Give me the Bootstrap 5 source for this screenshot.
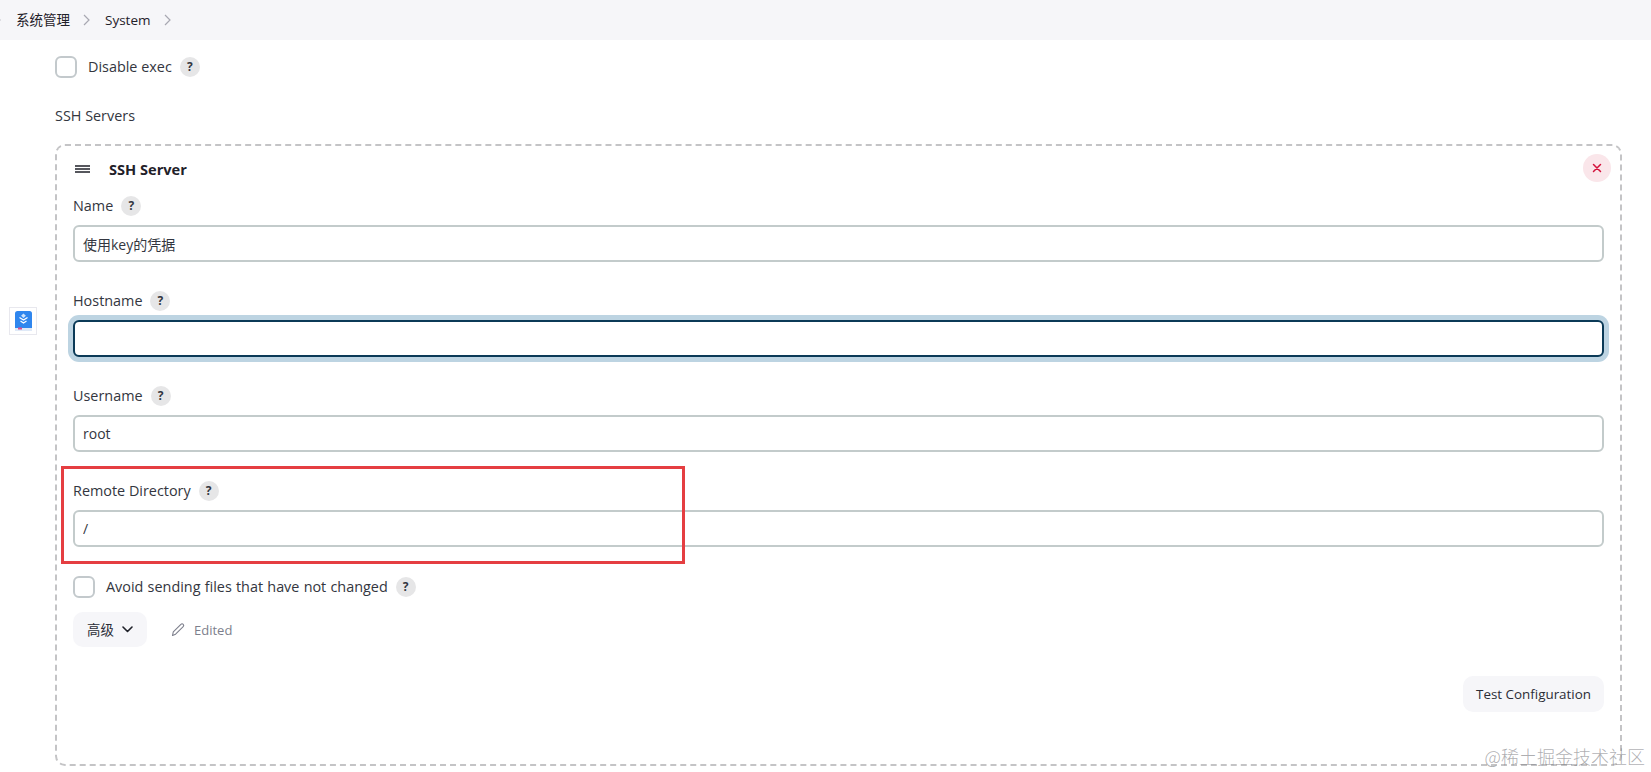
<!DOCTYPE html>
<html lang="en">
<head>
    <meta charset="UTF-8">
    <title>System</title>
    <link href="https://cdn.jsdelivr.net/npm/bootstrap@5.3.3/dist/css/bootstrap.min.css" rel="stylesheet">
    <style>
        html, body { height: 772px; overflow: hidden; }
        body { background: #fff; color: #333640; font-family: "Open Sans", "Noto Sans CJK SC", sans-serif; font-size: 14.4px; line-height: 20px; }
        .crumb-bar { height: 40px; background: #f6f6f9; color: #1f2129; font-size: 13.5px; }
        .crumb-sep { width: 8px; height: 12px; margin: 0 14px 0 13px; flex: none; }
        .crumb-first { margin: 0 14px 0 -6px; }
        .page-body { padding: 16px 29px 0 55px; }
        .jk-check { width: 22px; height: 22px; border: 2px solid #c3c9cc; border-radius: 6px; flex: none; background: #fff; }
        .help-dot { width: 20px; height: 20px; border-radius: 50%; background: #e6e6e7; color: #33363f; font-size: 12px; font-weight: 700; line-height: 20px; text-align: center; flex: none; }
        .row-check { height: 22px; }
        .row-check .help-dot { margin-left: 8px; }
        .row-check .check-text { margin-left: 11px; }
        .servers-title { margin-top: 28px; height: 20px; }
        .repeat-box { margin-top: 18px; height: 622px; border: 2px dashed #c4c4c6; border-radius: 10px; padding: 0 16px; position: relative; }
        .box-head { height: 45px; }
        .grip { width: 15px; margin-left: 2px; margin-right: 19px; }
        .box-title { font-weight: 700; color: #1f2129; font-size: 14.6px; }
        .close-round { position: absolute; top: 8px; right: 9px; width: 28px; height: 28px; border-radius: 50%; background: #fae6ea; }
        .field { height: 95px; padding-top: 5px; }
        .field-label { height: 20px; margin-bottom: 9px; }
        .field-label .help-dot { margin-left: 8px; }
        .jk-input { height: 37px; width: 100%; border: 2px solid #c3cbcb; border-radius: 6px; padding: 0 8px; color: #333640; font-size: 14px; outline: none; display: block; background: #fff; }
        .jk-input.focused { border-color: #0b3a57; box-shadow: 0 0 0 5px #bdd4e2; }
        .avoid-row { margin-top: 5px; word-spacing: .5px; }
        .adv-row { margin-top: 14px; height: 35px; }
        .soft-btn { background: #f6f6f9; border: 0; border-radius: 10px; color: #2b2d36; font-size: 13.4px; }
        .adv-btn { width: 74px; height: 35px; }
        .edited-note { margin-left: 24px; color: #7d7f8c; font-size: 13px; }
        .test-row { margin-top: 29px; }
        .test-btn { width: 141px; height: 36px; }
        .side-widget { position: absolute; left: 9px; top: 307px; width: 28px; height: 28px; background: #fff; border: 1px solid #e8e8ee; }
        .red-frame { position: absolute; left: 61px; top: 466px; width: 624px; height: 98px; border: 3px solid #e53e41; pointer-events: none; }
        .juejin-mark { position: absolute; right: 6px; top: 743px; font-family: "Noto Sans CJK SC", sans-serif; font-size: 18px; line-height: 26px; color: rgba(120,120,125,.6); font-weight: 300; }
    </style>
</head>
<body>
    <div class="crumb-bar d-flex align-items-center">
        <svg class="crumb-sep crumb-first" viewBox="0 0 8 12" fill="none" stroke="#a8a8b2" stroke-width="1.2"><path d="M1 1l5 5-5 5"/></svg>
        <span>系统管理</span>
        <svg class="crumb-sep" viewBox="0 0 8 12" fill="none" stroke="#a8a8b2" stroke-width="1.2"><path d="M1 1l5 5-5 5"/></svg>
        <span>System</span>
        <svg class="crumb-sep" viewBox="0 0 8 12" fill="none" stroke="#a8a8b2" stroke-width="1.2"><path d="M1 1l5 5-5 5"/></svg>
    </div>

    <div class="page-body">
        <div class="row-check d-flex align-items-center">
            <span class="jk-check"></span>
            <span class="check-text">Disable exec</span>
            <span class="help-dot">?</span>
        </div>
        <div class="servers-title">SSH Servers</div>

        <div class="repeat-box">
            <div class="box-head d-flex align-items-center">
                <svg class="grip" height="8" viewBox="0 0 15 8" stroke="#1f2129" stroke-width="1.3"><path d="M0 1h15M0 4h15M0 7h15"/></svg>
                <span class="box-title">SSH Server</span>
                <span class="close-round d-flex align-items-center justify-content-center">
                    <svg width="10" height="10" viewBox="0 0 10 10" fill="none" stroke="#d4123c" stroke-width="1.5" stroke-linecap="round"><path d="M1.5 1.5l7 7M8.5 1.5l-7 7"/></svg>
                </span>
            </div>

            <div class="field">
                <div class="field-label d-flex align-items-center">Name<span class="help-dot">?</span></div>
                <input class="jk-input" value="使用key的凭据">
            </div>
            <div class="field">
                <div class="field-label d-flex align-items-center">Hostname<span class="help-dot">?</span></div>
                <input class="jk-input focused" value="">
            </div>
            <div class="field">
                <div class="field-label d-flex align-items-center">Username<span class="help-dot">?</span></div>
                <input class="jk-input" value="root">
            </div>
            <div class="field">
                <div class="field-label d-flex align-items-center">Remote Directory<span class="help-dot">?</span></div>
                <input class="jk-input" value="/">
            </div>

            <div class="row-check avoid-row d-flex align-items-center">
                <span class="jk-check"></span>
                <span class="check-text">Avoid sending files that have not changed</span>
                <span class="help-dot">?</span>
            </div>

            <div class="adv-row d-flex align-items-center">
                <button type="button" class="soft-btn adv-btn d-flex align-items-center justify-content-center gap-2 p-0">
                    高级
                    <svg width="11" height="7" viewBox="0 0 11 7" fill="none" stroke="#1f2129" stroke-width="1.6" stroke-linecap="round" stroke-linejoin="round"><path d="M1 1l4.5 4.5L10 1"/></svg>
                </button>
                <span class="edited-note d-flex align-items-center gap-2">
                    <svg width="15" height="15" viewBox="0 0 15 15" fill="none" stroke="#7d7f8c" stroke-width="1.1" stroke-linejoin="round"><path d="M1.5 13.5l.8-3.6 7.6-7.6c.7-.7 1.7-.7 2.3 0s.7 1.6 0 2.3l-7.6 7.6z"/></svg>
                    Edited
                </span>
            </div>

            <div class="test-row d-flex justify-content-end">
                <button type="button" class="soft-btn test-btn p-0">Test Configuration</button>
            </div>
        </div>
    </div>

    <div class="side-widget d-flex align-items-center justify-content-center">
        <svg width="17" height="20" viewBox="0 0 17 20">
            <rect x="0" y="0" width="17" height="20" rx="2.5" fill="#2f86ee"/>
            <rect x="0" y="17" width="17" height="3" fill="#dfe9f7"/>
            <rect x="3" y="16.5" width="4" height="2" fill="#d9508f"/>
            <path d="M4.5 6.5l4 2.6 4-2.6M5.5 10l3 2 3-2" fill="none" stroke="#fff" stroke-width="1.2"/>
            <path d="M8.5 2.5l2.4 2.2-2.4 2.2-2.4-2.2z" fill="#cfe3fb"/>
        </svg>
    </div>
    <div class="red-frame"></div>
    <div class="juejin-mark">@稀土掘金技术社区</div>

    <script src="https://cdn.jsdelivr.net/npm/bootstrap@5.3.3/dist/js/bootstrap.bundle.min.js"></script>
</body>
</html>
